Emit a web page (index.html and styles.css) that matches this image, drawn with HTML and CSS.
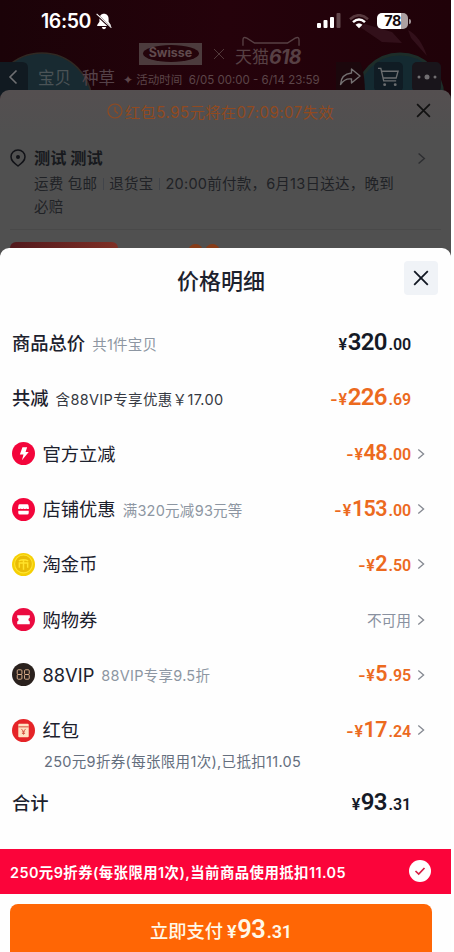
FILE: index.html
```html
<!DOCTYPE html>
<html lang="zh-CN">
<head>
<meta charset="utf-8">
<title>价格明细</title>
<link rel="stylesheet" href="styles.css">
</head>
<body>
<svg class="defs" aria-hidden="true">
  <symbol id="chev" viewBox="0 0 8 12"><path d="M1.3 1.4 6.6 6 1.3 10.6" fill="none" stroke="currentColor" stroke-width="1.3"/></symbol>
  <symbol id="close" viewBox="0 0 16 16"><path d="M1.2 1.2 14.8 14.8M14.8 1.2 1.2 14.8" fill="none" stroke="currentColor" stroke-width="1.8"/></symbol>
</svg>
<main class="phone">
  <header class="hero">
    <svg class="art" viewBox="0 0 451 96" aria-hidden="true">
      <circle cx="42" cy="103" r="50" fill="#182a31" stroke="#302923" stroke-width="1.5"/>
      <path d="M0 62H22Q28 62 28 68V96H0Z" fill="#111a21"/>
      <circle cx="400" cy="97" r="43" fill="#142a31" stroke="#1d2d29" stroke-width="3"/>
      <path d="M360 27 382 42 402 43 392 32 365 24ZM408 30Q420 36 427 56L411 38Z" fill="#32101a"/>
      <path d="M336 62H360Q365 72 365 96H336Z" fill="#1b070c"/>
      <rect x="374" y="62" width="29" height="30" rx="5" fill="#101c24"/>
      <rect x="412" y="62" width="29" height="30" rx="5" fill="#19151b"/>
    </svg>
    <div class="status">
      <span class="clock">16:50</span>
      <svg class="bell" viewBox="0 0 16 17"><path d="M8 .8C5.1.8 3.4 3 3.4 6v2.8L1.2 12v1h13.6v-1l-2.2-3.2V6C12.6 3 10.9.8 8 .8ZM5.8 14h4.4Q9.6 16.2 8 16.2T5.8 14Z" fill="#fff"/><path d="M1 1.8 15 15" stroke="#20040a" stroke-width="2.3"/><path d="M.6.8 15.4 14.7" stroke="#fff" stroke-width="1.1"/></svg>
      <svg class="signal" viewBox="0 0 24 16"><g fill="#fff"><rect y="10" width="4" height="5" rx="1"/><rect x="6.5" y="7" width="4" height="8" rx="1"/><rect x="13" y="4" width="4" height="11" rx="1"/></g><rect x="19.5" y="0" width="4" height="15" rx="1" fill="#61464b"/></svg>
      <svg class="wifi" viewBox="0 0 20 15"><path d="M1 5.2Q10-2.7 19 5.2" fill="none" stroke="#56383d" stroke-width="2.6"/><path d="M4 8.2Q10 2.7 16 8.2" fill="none" stroke="#fff" stroke-width="2.5"/><path d="M6.5 10.8Q10 7.8 13.5 10.8L10 14.3Z" fill="#fff"/></svg>
      <span class="battery">78</span><i class="nub"></i>
    </div>
    <div class="promo">
      <span class="swisse"><b>Swisse</b></span>
      <svg class="times" viewBox="0 0 12 12"><path d="m1 1 10 10M11 1 1 11" stroke="#51383a"/></svg>
      <span class="tmall">天猫<i>618</i><svg class="ears" viewBox="0 0 60 11"><path d="M1 10V4Q1 0 5 2L13 7H47L55 2Q59 0 59 4V10" fill="none" stroke="#574044" stroke-width="1.4"/></svg></span>
    </div>
    <nav class="nav">
      <svg class="back" viewBox="0 0 10 16"><path d="M8.5 1.5 2 8l6.500 6.500" fill="none" stroke="#6f7072" stroke-width="1.6"/></svg>
      <span class="tab">宝贝</span><span class="tab second">种草</span>
      <span class="period">✦ 活动时间&nbsp; 6/05 00:00 - 6/14 23:59</span>
      <svg class="share" viewBox="0 0 22 18"><path d="M12.500 1 21 8l-8.500 7v-4Q6 10 1.500 16.500 2 6 12.500 5Z" fill="none" stroke="#747071" stroke-width="1.4" stroke-linejoin="round"/></svg>
      <svg class="cart" viewBox="0 0 24 22"><path d="M1 2h3l3 13h13M5 5h17l-2 7H6.500" fill="none" stroke="#6b6e70" stroke-width="1.4"/><circle cx="8" cy="19" r="1.500" fill="#6b6e70"/><circle cx="19" cy="19" r="1.500" fill="#6b6e70"/></svg>
      <svg class="more" viewBox="0 0 20 6"><g fill="#716f72"><circle cx="2" cy="3" r="1.500"/><circle cx="10" cy="3" r="2.500"/><circle cx="18" cy="3" r="1.500"/></g></svg>
    </nav>
  </header>

  <section class="order">
    <div class="expiry">
      <svg class="watch" viewBox="0 0 16 16"><circle cx="8" cy="8" r="7" fill="none" stroke="currentColor" stroke-width="1.2"/><path d="M8 4v4l3 2.500" fill="none" stroke="currentColor" stroke-width="1.2"/></svg>
      <span class="expirytext">红包5.95元将在07:09:07失效</span>
      <svg class="orderclose"><use href="#close"/></svg>
    </div>
    <div class="address">
      <svg class="pin" viewBox="0 0 16 18"><path d="M8 1C4 1 1 3.900 1 7.700c0 4 3 6.300 7 9.300 4-3 7-5.300 7-9.300C15 3.900 12 1 8 1Z" fill="none" stroke="#111217" stroke-width="1.500"/><circle cx="8" cy="8" r="2" fill="#111217"/></svg>
      <div class="place"><b class="name">测试 测试</b><p class="ship">运费 包邮<i></i>退货宝<i></i>20:00前付款，6月13日送达，晚到<br>必赔</p></div>
      <svg class="chev dim"><use href="#chev"/></svg>
    </div>
    <div class="goods"><span class="thumb"></span><span class="dot"></span><span class="dot"></span></div>
  </section>

  <section class="sheet">
    <div class="title"><h1>价格明细</h1><button class="x"><svg><use href="#close"/></svg></button></div>
    <div class="row strong"><span class="label">商品总价</span><span class="note">共1件宝贝</span><span class="price large plain"><small>¥</small>320<em>.00</em></span></div>
    <div class="row strong"><span class="label">共减</span><span class="note dark">含88VIP专享优惠￥17.00</span><span class="price large"><small><s>-</s>¥</small>226<em>.69</em></span></div>
    <div class="row"><svg class="ico" viewBox="0 0 22 22"><circle cx="11" cy="11" r="11" fill="#f3053b"/><path d="M10 5h4.500L13 9.500h3L9.500 17.500 11 12H7.500Z" fill="#fff"/></svg><span class="label">官方立减</span><span class="price"><small><s>-</s>¥</small>48<em>.00</em></span><svg class="chev"><use href="#chev"/></svg></div>
    <div class="row"><svg class="ico" viewBox="0 0 22 22"><circle cx="11" cy="11" r="11" fill="#f3053b"/><path d="M7.300 6h7.400q.8 0 1 .8l.6 3.200q-1.300 1.200-2.650 0-1.300 1.200-2.650 0-1.300 1.200-2.650 0-1.300 1.200-2.650 0l.6-3.200q.2-.8 1-.8ZM6 12.300h10v2q0 1.500-1.500 1.500h-7Q6 15.800 6 14.300Z" fill="#fff"/></svg><span class="label">店铺优惠</span><span class="note">满320元减93元等</span><span class="price"><small><s>-</s>¥</small>153<em>.00</em></span><svg class="chev"><use href="#chev"/></svg></div>
    <div class="row"><svg class="ico" viewBox="0 0 22 22"><circle cx="11" cy="11" r="11" fill="#f5cf04"/><circle cx="11" cy="10.500" r="8.500" fill="#e9bc06" stroke="#ffe431"/><path d="M6.500 7.500Q11 5.500 15.500 7.500M7 14V9.500h8V14M11 7v9" fill="none" stroke="#ffe32b" stroke-width="1.400"/></svg><span class="label">淘金币</span><span class="price"><small><s>-</s>¥</small>2<em>.50</em></span><svg class="chev"><use href="#chev"/></svg></div>
    <div class="row"><svg class="ico" viewBox="0 0 22 22"><circle cx="11" cy="11" r="11" fill="#eb0b40"/><path d="M5 7h12v2.300a1.900 1.900 0 0 0 0 3.600V15.500H5v-2.600a1.900 1.900 0 0 0 0-3.600Z" fill="#fff"/></svg><span class="label">购物券</span><span class="none">不可用</span><svg class="chev"><use href="#chev"/></svg></div>
    <div class="row"><svg class="ico" viewBox="0 0 22 22"><circle cx="11" cy="11" r="11" fill="#2a211d"/><g fill="none" stroke="#dfb28e" stroke-width=".9"><rect x="5" y="6.500" width="4.500" height="4.500" rx="1"/><rect x="5" y="11" width="4.500" height="4.500" rx="1"/><rect x="12" y="6.500" width="4.500" height="4.500" rx="1"/><rect x="12" y="11" width="4.500" height="4.500" rx="1"/></g></svg><span class="label">88VIP</span><span class="note">88VIP专享9.5折</span><span class="price"><small><s>-</s>¥</small>5<em>.95</em></span><svg class="chev"><use href="#chev"/></svg></div>
    <div class="row"><svg class="ico" viewBox="0 0 22 22"><circle cx="11" cy="11" r="11" fill="#e52427"/><rect x="6" y="4.500" width="10" height="13" rx="1" fill="#ffe2c2"/><path d="M6 7.500h10" stroke="#d65443"/><path d="m9 9.500 2 2.500 2-2.500M11 12v3M9.500 12.300h3M9.500 13.800h3" fill="none" stroke="#d65443" stroke-width=".9"/></svg><span class="label">红包</span><span class="price"><small><s>-</s>¥</small>17<em>.24</em></span><svg class="chev"><use href="#chev"/></svg></div>
    <p class="detail">250元9折券(每张限用1次),已抵扣11.05</p>
    <div class="row strong total"><span class="label">合计</span><span class="price large plain"><small>¥</small>93<em>.31</em></span></div>
    <div class="coupon"><span class="coupontext">250元9折券(每张限用1次),当前商品使用抵扣11.05</span><svg class="check" viewBox="0 0 22 22"><circle cx="11" cy="11" r="11" fill="#fff"/><path d="m6.500 11 3.200 3L15.500 8" fill="none" stroke="#d51f45" stroke-width="1.700"/></svg></div>
    <button class="pay"><span class="paytext">立即支付</span><span class="price large"><small>¥</small>93<em>.31</em></span></button>
  </section>
</main>
</body>
</html>
```
FILE: styles.css
```css
* { box-sizing: border-box; }
body { margin: 0; background: #fff; font-family: Inter, "Noto Sans CJK SC", sans-serif; color: #1c212d; }
.defs { position: absolute; width: 0; height: 0; }
svg { display: block; flex: none; }
h1, p { margin: 0; }
button { border: 0; padding: 0; font: inherit; }
.phone { width: 451px; height: 952px; overflow: hidden; background: #1d0208; white-space: nowrap; }
.hero { position: relative; height: 90px; background: linear-gradient(90deg, #1b0308, #25020b 50%, #200209); }
.art { position: absolute; inset: 0; width: 451px; height: 96px; }
.status, .promo, .nav { position: relative; display: flex; align-items: center; }
.status { height: 42px; padding-left: 41px; color: #fff; }
.clock { width: 52px; font-size: 19.5px; font-weight: 600; letter-spacing: -.4px; }
.bell { width: 16px; height: 17px; margin-left: 3px; }
.signal { width: 24px; height: 16px; margin-left: 205px; }
.wifi { width: 20px; height: 15px; margin-left: 8px; }
.battery { width: 31px; height: 16px; margin-left: 8px; border-radius: 5px; background: linear-gradient(90deg, #fff 77%, #ada0a2 77%); color: #160b0e; font-size: 14.5px; line-height: 16px; font-weight: 700; letter-spacing: -.6px; text-align: center; }
.nub { width: 2px; height: 5px; margin-left: 1px; background: #a19599; border-radius: 0 2px 2px 0; }
.promo { height: 23px; padding-left: 139px; }
.swisse { display: grid; place-items: center; width: 63px; height: 22px; background: #4c3b3d; }
.swisse b { width: 56px; height: 17px; border-radius: 50%; background: #24040b; color: #604a4d; font-size: 12.5px; line-height: 16px; text-align: center; }
.times { width: 12px; height: 12px; margin-left: 11px; }
.tmall { position: relative; display: flex; align-items: center; margin: 6px 0 0 10px; color: #574044; font-size: 17px; line-height: 18px; }
.tmall i { font-size: 19.5px; font-weight: 700; letter-spacing: -.7px; }
.ears { position: absolute; left: 7px; top: -12px; width: 58px; height: 11px; }
.nav { height: 23px; padding-left: 8px; }
.back { width: 10px; height: 16px; }
.tab { margin-left: 20px; color: #4b5356; font-size: 16.5px; }
.tab.second { margin-left: 11px; color: #554249; }
.period { width: 207px; margin: 5px 0 0 8px; font-size: 11.5px; color: #5c4549; }
.share { width: 22px; height: 18px; margin-left: 9px; }
.cart { width: 23px; height: 22px; margin-left: 16px; }
.more { width: 20px; height: 6px; margin-left: 17px; }
.order { position: relative; height: 174px; background: linear-gradient(#544f50, #505050 45px); border-radius: 9px 9px 0 0; }
.expiry { display: flex; align-items: center; height: 42px; padding: 0 0 1px 107px; color: #914a20; }
.watch { width: 16px; height: 16px; }
.expirytext { width: 212px; margin-left: 2px; font-size: 15.2px; letter-spacing: .42px; }
.orderclose { width: 15px; height: 15px; margin-left: 79px; color: #111; }
.address { display: flex; height: 98px; margin: 0 10px; padding-top: 14px; border-bottom: 1px solid #494949; color: #17191d; }
.pin { width: 16px; height: 18px; margin-top: 3px; }
.place { width: 376px; margin-left: 8px; }
.name { display: block; font-size: 16.2px; line-height: 24px; }
.ship { margin-top: 3px; font-size: 14.500px; line-height: 22.500px; letter-spacing: .24px; color: #202226; }
.ship i { display: inline-block; width: 1px; height: 12px; margin: 0 5.500px; background: #41444a; vertical-align: -1px; }
.chev { width: 8px; height: 12px; color: #858991; }
.chev.dim { width: 9px; height: 13px; margin: 6px 0 0 7px; color: #2d2e31; }
.goods { display: flex; padding: 12px 10px; }
.thumb { width: 108px; height: 23px; margin-right: 70px; border-radius: 6px; background: linear-gradient(90deg, #52191d, #7f3026); }
.dot { width: 15px; height: 15px; margin: 2px 2px 0 0; border-radius: 50%; background: #873c18; }
.sheet { position: relative; height: 704px; margin-top: -16px; background: #fefefe; border-radius: 9px 9px 0 0; }
.title { display: flex; align-items: center; height: 67.500px; padding: 0 13px 8px 177px; }
h1 { width: 227px; font-size: 22px; line-height: 33px; font-weight: 500; padding-top: 8px; }
.x { display: grid; place-items: center; width: 34px; height: 34px; background: #f0f3f7; border-radius: 4px; color: #111722; }
.x svg { width: 16px; height: 16px; }
.row { display: flex; align-items: center; height: 55.300px; padding: 0 26px 0 12px; }
.strong { padding-right: 40px; }
.ico { width: 23px; height: 23px; margin-right: 7.5px; }
.label { font-size: 18.300px; line-height: 26px; }
.strong .label { font-weight: 500; }
.note { margin-left: 7px; font-size: 14.500px; letter-spacing: .26px; color: #8d96a2; }
.note.dark { color: #353942; letter-spacing: .34px; }
.none { margin-left: auto; font-size: 14.700px; color: #8991a0; }
.row .price { margin-left: auto; }
.price { display: flex; align-items: baseline; font-family: Roboto, sans-serif; font-size: 21.500px; line-height: 28px; font-weight: 600; letter-spacing: -.6px; color: #ec6a1e; padding-top: 1px; }
.price small { margin-right: .5px; font-size: 16px; letter-spacing: 0; }
.price s { display: inline-block; text-decoration: none; transform: scaleX(1.25); margin-right: 1.5px; }
.price em { margin-left: 1.5px; font-size: 16px; font-style: normal; letter-spacing: -.1px; }
.price.large { font-size: 24px; }
.price.plain { color: #151a26; }
.row .chev { margin-left: 6px; }
.detail { height: 20px; margin: -5.500px 0 0 44px; font-size: 14.500px; line-height: 20px; letter-spacing: .32px; color: #656f7e; }
.total { height: 62px; padding-bottom: 1px; }
.coupon { display: flex; align-items: center; justify-content: space-between; height: 45px; margin-top: 15px; padding: 0 20px 1px 10px; background: #fb043a; color: #fff; }
.coupontext { font-size: 14.400px; font-weight: 600; letter-spacing: .44px; }
.check { width: 22px; height: 22px; }
.pay { display: flex; align-items: center; justify-content: center; width: 422px; height: 58px; margin: 10px 0 0 10px; padding-bottom: 6px; border-radius: 8px; background: #ff6605; }
.paytext { margin-right: 4px; font-size: 18.3px; font-weight: 500; color: #fff8e8; }
.pay .price { color: #fff8e8; font-size: 25.5px; }
.pay .price small { font-size: 18px; }
.pay .price em { font-size: 18px; }
```
